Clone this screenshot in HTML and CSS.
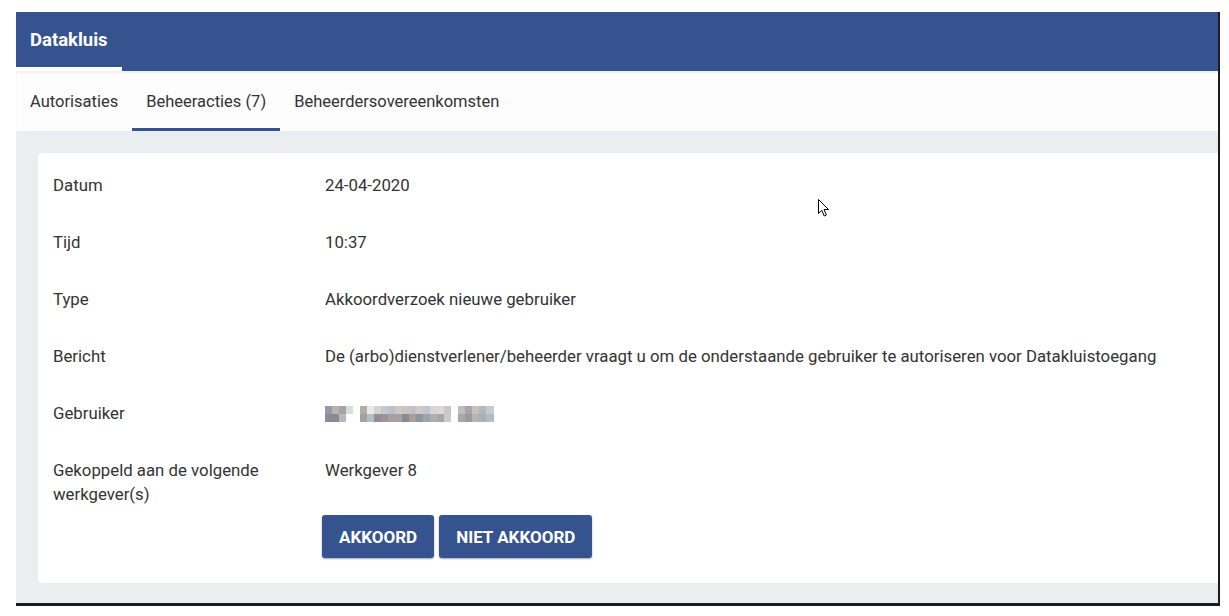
FILE: index.html
```html
<!DOCTYPE html>
<html lang="nl">
<head>
<meta charset="utf-8">
<title>Datakluis</title>
<link rel="stylesheet" href="styles.css">
</head>
<body>
<div class="frame">
  <header class="topbar">
    <div class="brand">Datakluis</div>
  </header>
  <nav class="tabs">
    <a class="tab">Autorisaties</a>
    <a class="tab active">Beheeracties (7)</a>
    <a class="tab">Beheerdersovereenkomsten</a>
  </nav>
  <main class="content">
    <section class="card">
      <dl class="details">
        <dt>Datum</dt>
        <dd>24-04-2020</dd>
        <dt>Tijd</dt>
        <dd>10:37</dd>
        <dt>Type</dt>
        <dd>Akkoordverzoek nieuwe gebruiker</dd>
        <dt>Bericht</dt>
        <dd>De (arbo)dienstverlener/beheerder vraagt u om de onderstaande gebruiker te autoriseren voor Datakluistoegang</dd>
        <dt>Gebruiker</dt>
        <dd><span class="blurred" aria-label="verborgen naam"></span></dd>
        <dt>Gekoppeld aan de volgende werkgever(s)</dt>
        <dd>
          Werkgever 8
          <div class="actions">
            <button class="btn">Akkoord</button>
            <button class="btn">Niet akkoord</button>
          </div>
        </dd>
      </dl>
    </section>
  </main>
  <svg class="cursor" width="13" height="20" viewBox="0 0 13 20">
    <path d="M1.5 1.5 L1.5 15.5 L4.8 12.4 L7.2 18 L9.4 17 L7 11.5 L11.5 11.5 Z" fill="#fff" stroke="#000" stroke-width="1" stroke-linejoin="miter"/>
  </svg>
</div>
</body>
</html>
```

FILE: styles.css
```css
html, body {
  margin: 0;
  padding: 0;
  background: #ffffff;
}

body {
  font-family: Roboto, "Liberation Sans", Arial, sans-serif;
  color: #333333;
}

.frame {
  position: relative;
  margin: 12px 0 0 16px;
  width: 1202px;
  height: 591px;
  border-right: 2px solid #1c1c1c;
  border-bottom: 3px solid #1c1c1c;
  display: flex;
  flex-direction: column;
  overflow: hidden;
}

.topbar {
  height: 59px;
  flex: 0 0 59px;
  background: #35538f;
  display: flex;
  align-items: stretch;
}

.brand {
  box-sizing: border-box;
  width: 106px;
  padding-left: 14px;
  display: flex;
  align-items: center;
  color: #ffffff;
  font-weight: 700;
  font-size: 18.5px;
  border-bottom: 4px solid #ffffff;
}

.tabs {
  height: 60px;
  flex: 0 0 60px;
  display: flex;
  background: #fdfdfd;
  box-shadow: inset 0 2px 2px rgba(0, 0, 0, 0.05);
}

.tab {
  box-sizing: border-box;
  padding: 3px 14px 0;
  display: flex;
  align-items: center;
  font-size: 16.5px;
  color: #333333;
  border-bottom: 3px solid transparent;
}

.tab.active {
  border-bottom-color: #35538f;
}

.content {
  flex: 1;
  background: #ebeef1;
  padding: 22px 0 20px 22px;
}

.card {
  background: #ffffff;
  border-radius: 4px 0 0 4px;
  padding: 20px 0 25px 15px;
}

.details {
  display: grid;
  grid-template-columns: 272px 1fr;
  row-gap: 33px;
  margin: 0;
  font-size: 16.8px;
  line-height: 24px;
  color: #333333;
}

.details dt {
  margin: 0;
  padding-right: 40px;
}

.details dd {
  margin: 0;
}

.blurred {
  display: inline-block;
  vertical-align: middle;
  width: 169px;
  height: 16px;
  margin-top: -2px;
  background:
    linear-gradient(90deg,
      #9a98a6 0 7px, #b9b2ac 7px 14px, #a6a2a8 14px 21px, #d8dcdf 21px 28px,
      #ffffff 28px 35px, #b5aca6 35px 42px, #e6ebef 42px 49px, #d9d3cd 49px 56px,
      #c5c9cf 56px 63px, #b9c2cb 63px 70px, #cfc8c2 70px 77px, #c8c3c6 77px 84px,
      #bcc3cb 84px 91px, #d2cbc4 91px 98px, #c0c7ce 98px 105px, #d8d6d4 105px 112px,
      #dad9d8 112px 119px, #c9c6cf 119px 126px, #ffffff 126px 133px, #c1bcbf 133px 140px,
      #a9a6ab 140px 147px, #c9c2ba 147px 154px, #b1b7bf 154px 161px, #c7cbd0 161px 169px)
      0 0 / 169px 8px no-repeat,
    linear-gradient(90deg,
      #8e8a96 0 7px, #8d8797 7px 14px, #b4b9bd 14px 21px, #ffffff 21px 28px,
      #ffffff 28px 35px, #a3a09e 35px 42px, #b3c0cc 42px 49px, #8f8f97 49px 56px,
      #989696 56px 63px, #a9a096 63px 70px, #9fa4ad 70px 77px, #8d8a87 77px 84px,
      #a79f98 84px 91px, #8e96a4 91px 98px, #a0a5ab 98px 105px, #b1afab 105px 112px,
      #a7aaa4 112px 119px, #c9cbcf 119px 126px, #ffffff 126px 133px, #aaa7ac 133px 140px,
      #9b9aa0 140px 147px, #b5b5b6 147px 154px, #a9b1b8 154px 161px, #b4bcc3 161px 169px)
      0 8px / 169px 8px no-repeat;
}

.actions {
  display: flex;
  gap: 5px;
  margin: 33px 0 0 -3px;
}

.btn {
  box-sizing: border-box;
  height: 43px;
  padding: 0 17px;
  border: none;
  border-radius: 3px;
  background: #35538f;
  color: #ffffff;
  font-family: Roboto, "Liberation Sans", Arial, sans-serif;
  font-weight: 700;
  font-size: 17px;
  text-transform: uppercase;
  box-shadow: 0 1px 2px rgba(0, 0, 0, 0.35);
  cursor: pointer;
}

.cursor {
  position: absolute;
  left: 801px;
  top: 186px;
}
```
